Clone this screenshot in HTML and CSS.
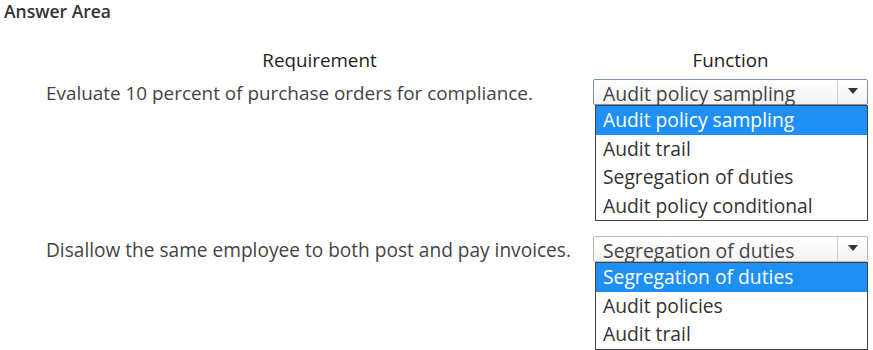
FILE: index.html
```html
<!DOCTYPE html>
<html lang="en">
<head>
    <meta charset="UTF-8">
    <title>Answer Area</title>
    <link rel="stylesheet" href="styles.css">
</head>
<body>
    <h1 class="area-title">Answer Area</h1>

    <div class="answer-grid">
        <div class="col-head">Requirement</div>
        <div class="col-head">Function</div>

        <div class="requirement">Evaluate 10 percent of purchase orders for compliance.</div>
        <div class="dropdown">
            <div class="select focused">
                <span class="select-value">Audit policy sampling</span>
                <span class="select-arrow"></span>
            </div>
            <ul class="options">
                <li class="selected">Audit policy sampling</li>
                <li>Audit trail</li>
                <li>Segregation of duties</li>
                <li>Audit policy conditional</li>
            </ul>
        </div>

        <div class="requirement">Disallow the same employee to both post and pay invoices.</div>
        <div class="dropdown">
            <div class="select">
                <span class="select-value">Segregation of duties</span>
                <span class="select-arrow"></span>
            </div>
            <ul class="options">
                <li class="selected">Segregation of duties</li>
                <li>Audit policies</li>
                <li>Audit trail</li>
            </ul>
        </div>
    </div>
</body>
</html>
```

FILE: styles.css
```css
body {
    margin: 0;
    padding: 0 0 0 4px;
    font-family: "Open Sans", "Noto Sans", sans-serif;
    color: #3a3a3a;
    background: #fff;
    overflow: hidden;
}
.area-title {
    margin: 0;
    font-size: 17.5px;
    font-weight: 600;
    line-height: 22px;
    color: #333;
}
.answer-grid {
    display: grid;
    grid-template-columns: 547px 275px;
    margin: 26px 0 0 42px;
}
.col-head {
    text-align: center;
    font-size: 18.8px;
    font-weight: 500;
    line-height: 24px;
    color: #222;
}
.requirement {
    font-size: 18.9px;
    line-height: 26px;
    padding-top: 8px;
    color: #444;
    white-space: nowrap;
}
.requirement + .dropdown + .requirement {
    font-size: 19.1px;
}
.dropdown {
    padding-top: 7px;
    margin-bottom: 8px;
}
.select {
    display: flex;
    height: 24px;
    border: 1px solid #b8b8b8;
    border-radius: 2px;
    background: linear-gradient(#fff, #f3f3f3);
}
.select.focused {
    border-color: #7d8fb0;
}
.select-value {
    flex: 1;
    padding-left: 9px;
    font-size: 19.4px;
    line-height: 27px;
    color: #444;
    white-space: nowrap;
}
.select-arrow {
    width: 29px;
    border-left: 1px solid #d0d0d0;
    position: relative;
}
.select-arrow::after {
    content: "";
    position: absolute;
    left: 10px;
    top: 8px;
    border-left: 5px solid transparent;
    border-right: 5px solid transparent;
    border-top: 6px solid #333;
}
/* the open list is drawn over the bottom of the select */
.options {
    position: relative;
    list-style: none;
    margin: 0 0 0 2px;
    padding: 0;
    border: 1px solid #444;
    background: #fff;
}
.options li {
    font-size: 19.3px;
    line-height: 28.5px;
    padding-left: 7px;
    color: #333;
    white-space: nowrap;
}
.options li.selected {
    background: #1e8ff5;
    color: #fff;
}
```
